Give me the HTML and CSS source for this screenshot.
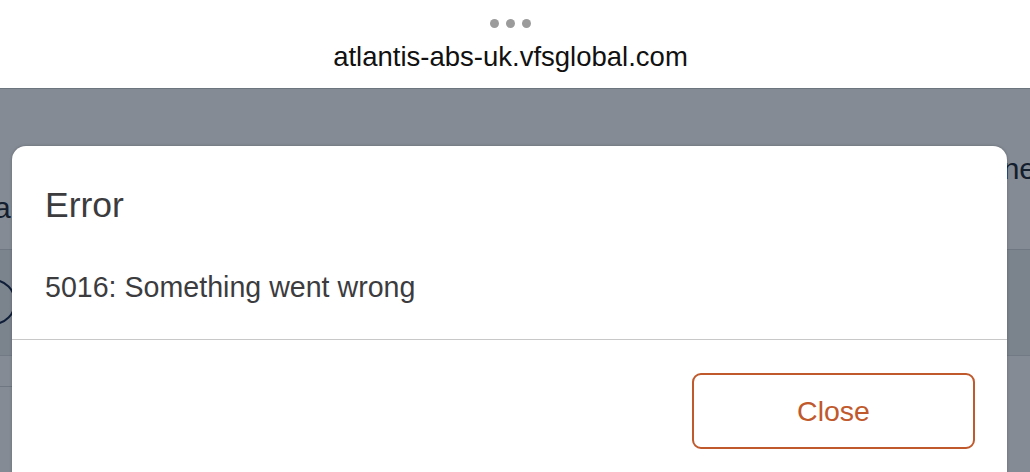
FILE: index.html
```html
<!DOCTYPE html>
<html lang="en">
<head>
  <meta charset="UTF-8" />
  <meta name="viewport" content="width=device-width, initial-scale=1.0" />
  <title>atlantis-abs-uk.vfsglobal.com</title>
  <link rel="stylesheet" href="styles.css">
</head>
<body>
  <header class="browser-bar">
    <div class="dots"><span></span><span></span><span></span></div>
    <div class="url">atlantis-abs-uk.vfsglobal.com</div>
  </header>

  <main class="page">
    <div class="under">
      <div class="under-head">
        <span class="under-left">a</span>
        <span class="under-right">ne</span>
      </div>
      <div class="under-band">
        <span class="step-circle"></span>
      </div>
      <div class="under-row"></div>
    </div>

    <div class="backdrop"></div>

    <div class="modal">
      <h2 class="modal-title">Error</h2>
      <p class="modal-body">5016: Something went wrong</p>
      <div class="modal-footer">
        <button class="btn-close">Close</button>
      </div>
    </div>
  </main>
</body>
</html>
```

FILE: styles.css
```css
html, body {
  margin: 0;
  padding: 0;
  background: #fff;
  overflow: hidden;
  font-family: "Liberation Sans", Arial, sans-serif;
  color: #3a3a3c;
}
.browser-bar {
  height: 88px;
  display: flex;
  flex-direction: column;
  align-items: center;
  background: #fff;
  border-bottom: 1px solid #6c747d;
}
.dots {
  display: flex;
  gap: 7px;
  margin-top: 19px;
  margin-right: 10px;
}
.dots span {
  width: 9px;
  height: 9px;
  border-radius: 50%;
  background: #9b9b9b;
}
.url {
  margin-top: 13px;
  margin-right: 9px;
  font-size: 27.5px;
  line-height: 32px;
  color: #111;
}
.page {
  position: relative;
  height: 383px;
  overflow: hidden;
}
.under {
  background: #fff;
  height: 100%;
}
.under-head {
  height: 160px;
  display: flex;
  justify-content: space-between;
  border-bottom: 1px solid #d2d6da;
  font-family: "Liberation Sans", Arial, sans-serif;
  font-size: 30px;
  color: #1c2533;
}
.under-left {
  margin-top: 102px;
  margin-left: -6px;
}
.under-right {
  margin-top: 63px;
  margin-right: -6px;
}
.under-band {
  height: 105px;
  background: #eceef1;
  border-bottom: 1px solid #d9dce0;
  display: flex;
  align-items: flex-start;
}
.step-circle {
  width: 42px;
  height: 42px;
  margin-top: 29px;
  margin-left: -30px;
  border: 2px solid #132447;
  border-radius: 50%;
}
.under-row {
  width: 60px;
  height: 30px;
  border-bottom: 1px solid #d2d6da;
}
.backdrop {
  position: absolute;
  inset: 0;
  background: rgba(10, 24, 42, 0.5);
}
.modal {
  position: absolute;
  left: 12px;
  top: 57px;
  width: 995px;
  height: 360px;
  background: #fff;
  border-radius: 14px;
  box-shadow: 0 0 3px rgba(0, 0, 0, 0.25);
}
.modal-title {
  margin: 0;
  padding: 37px 33px 0;
  font-size: 35.5px;
  line-height: 44px;
  font-weight: normal;
  color: #3c3c3e;
}
.modal-body {
  margin: 0;
  padding: 43px 33px 35px;
  font-size: 28.6px;
  line-height: 34px;
  color: #3c3c3e;
  border-bottom: 1px solid #c8c8c8;
}
.modal-footer {
  display: flex;
  justify-content: flex-end;
  padding: 33px 32px 0;
}
.btn-close {
  width: 283px;
  height: 76px;
  background: #fff;
  border: 2px solid #c0592b;
  border-radius: 9px;
  color: #c0592b;
  font-family: inherit;
  font-size: 28.5px;
}
```
